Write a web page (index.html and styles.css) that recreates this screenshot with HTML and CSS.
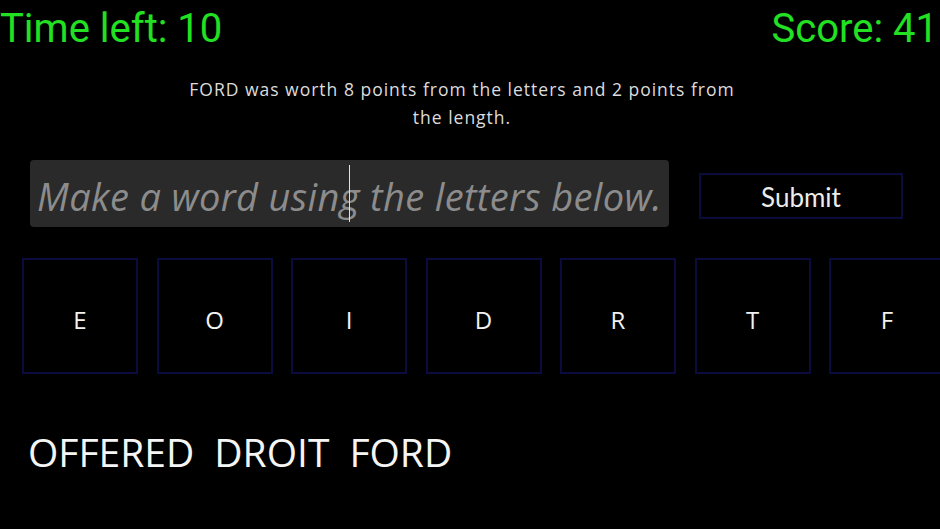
FILE: index.html
```html
<!DOCTYPE html>
<html>
<head>
<meta charset="utf-8">
<link rel="stylesheet" href="styles.css">
</head>
<body>
<div class="page">
  <header class="top">
    <span class="stat">Time left: 10</span>
    <span class="stat">Score: 41</span>
  </header>
  <p class="message">FORD was worth 8 points from the letters and 2 points from the length.</p>
  <div class="entry">
    <div class="field">
      <span class="placeholder">Make a word using the letters below.</span>
      <span class="caret"></span>
    </div>
    <div class="submit">Submit</div>
  </div>
  <div class="tiles">
    <div class="tile">E</div>
    <div class="tile">O</div>
    <div class="tile">I</div>
    <div class="tile">D</div>
    <div class="tile">R</div>
    <div class="tile">T</div>
    <div class="tile">F</div>
  </div>
  <div class="words">
    <span class="word">OFFERED</span>
    <span class="word">DROIT</span>
    <span class="word">FORD</span>
  </div>
</div>
</body>
</html>
```
FILE: styles.css
```css
html, body {
  margin: 0;
  padding: 0;
  background: #000;
  width: 940px;
  height: 529px;
  overflow: hidden;
}
.page {
  width: 940px;
  height: 529px;
  overflow: hidden;
}
.top {
  display: flex;
  justify-content: space-between;
  padding: 5px 2px 0 0;
  height: 53px;
}
.stat {
  font-family: Roboto, "Liberation Sans", sans-serif;
  font-size: 40px;
  line-height: 47px;
  color: #22e022;
}
.message {
  margin: 17px 0 0 184px;
  width: 556px;
  text-align: center;
  font-family: "Open Sans", "Noto Sans", sans-serif;
  font-size: 17.5px;
  letter-spacing: 1px;
  line-height: 28px;
  color: #dcdcdc;
}
.entry {
  display: flex;
  align-items: center;
  margin-top: 29px;
  padding-left: 30px;
}
.field {
  position: relative;
  width: 639px;
  height: 67px;
  background: #2a2a2a;
  border-radius: 4px;
  display: flex;
  align-items: center;
  padding: 4px 0 0 7px;
  box-sizing: border-box;
}
.placeholder {
  font-family: "Open Sans", "Noto Sans", sans-serif;
  font-style: italic;
  font-size: 38px;
  letter-spacing: 0.35px;
  color: #8c8c8c;
  white-space: nowrap;
}
.caret {
  position: absolute;
  left: 319px;
  top: 5px;
  width: 1px;
  height: 57px;
  background: #e0e0e0;
}
.submit {
  margin: 4px 0 0 30px;
  width: 204px;
  height: 46px;
  box-sizing: border-box;
  border: 2px solid #0b0b3c;
  display: flex;
  align-items: center;
  justify-content: center;
  padding-top: 3px;
  font-family: Lato, "Noto Sans", sans-serif;
  font-size: 26px;
  color: #ececec;
}
.tiles {
  display: flex;
  gap: 18.5px;
  margin-top: 31px;
  padding-left: 22px;
  width: 1000px;
}
.tile {
  flex: none;
  width: 116px;
  height: 116px;
  box-sizing: border-box;
  border: 2px solid #0b0b40;
  display: flex;
  align-items: center;
  justify-content: center;
  padding-top: 6px;
  font-family: "Open Sans", "Noto Sans", sans-serif;
  font-size: 24px;
  color: #f2f2f2;
}
.words {
  margin-top: 54px;
  padding-left: 28px;
  display: flex;
  gap: 20px;
}
.word {
  font-family: "Open Sans", "Noto Sans", sans-serif;
  font-size: 39px;
  line-height: 48px;
  color: #f5f5f5;
}
```
